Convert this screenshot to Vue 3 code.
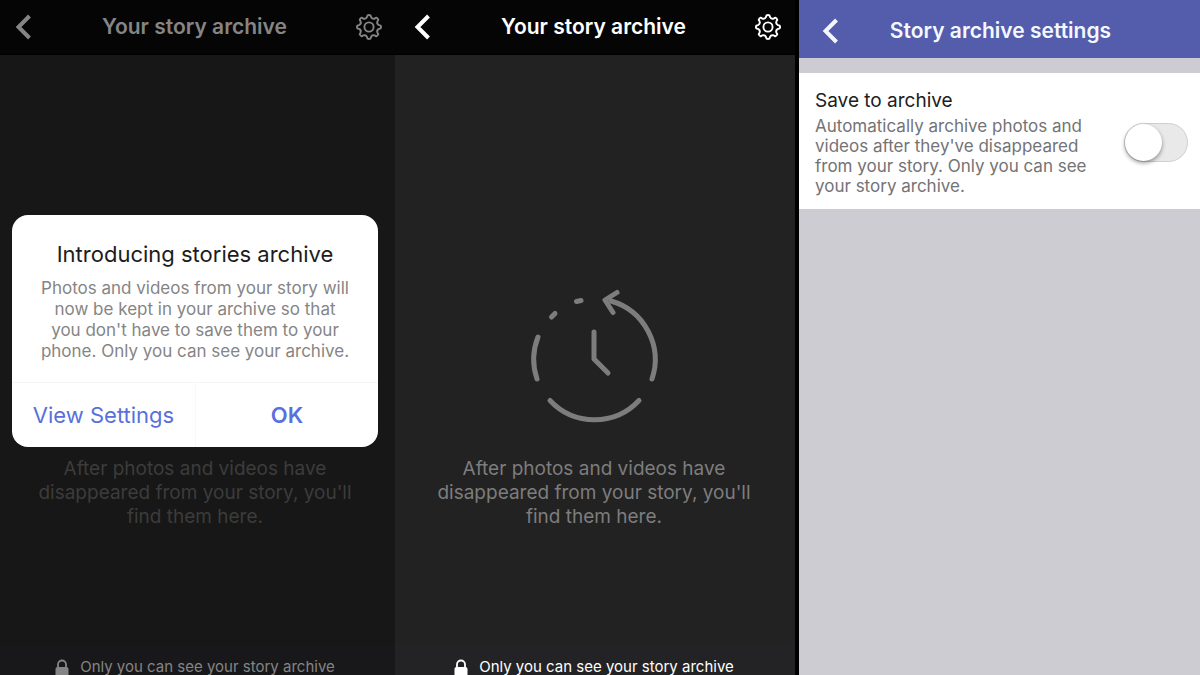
<script setup>
import { ref } from 'vue'

const saveToArchive = ref(false)

const screens = [
  { id: 'intro', dialog: true },
  { id: 'archive', dialog: false }
]

function polar(radius, degrees) {
  const a = ((degrees - 90) * Math.PI) / 180
  return `${(14 + radius * Math.cos(a)).toFixed(2)} ${(14 + radius * Math.sin(a)).toFixed(2)}`
}

function buildGear() {
  let d = ''
  for (let i = 0; i < 8; i++) {
    const t = i * 45
    d += `${i ? 'L' : 'M'}${polar(11.8, t - 7)} Q${polar(12.4, t)} ${polar(11.8, t + 7)} `
    d += `L${polar(10.2, t + 11)} Q${polar(8, t + 22.5)} ${polar(10.2, t + 34)} `
  }
  return d + 'Z'
}

const gearPath = buildGear()
</script>

<template>
  <div class="page">
    <section
      v-for="screen in screens"
      :key="screen.id"
      class="screen"
      :class="{ dimmed: screen.dialog }"
    >
      <header class="bar">
        <button class="icon-button" type="button" aria-label="Back">
          <svg width="20" height="28" viewBox="0 0 20 28">
            <path d="M15.5 3 4.5 14 15.5 25" fill="none" stroke="currentColor" stroke-width="4" />
          </svg>
        </button>
        <h1 class="bar-title">Your story archive</h1>
        <button class="icon-button" type="button" aria-label="Settings">
          <svg width="28" height="28" viewBox="0 0 28 28" fill="none" stroke="currentColor" stroke-width="1.9" stroke-linejoin="round">
            <path :d="gearPath" />
            <circle cx="14" cy="14" r="4.6" />
          </svg>
        </button>
      </header>

      <main class="empty">
        <svg class="clock" width="140" height="140" viewBox="0 0 140 140" fill="none" stroke="currentColor" stroke-width="5" stroke-linecap="round" stroke-linejoin="round">
          <path d="M87 13 A61 61 0 0 1 128 91" />
          <path d="M93 4.5 81 12 89 24.5" />
          <path d="M115 112.500 A61 61 0 0 1 26 112.500" />
          <path d="M13 91 A61 61 0 0 1 14 49" />
          <path d="M27.5 29 31 25.5 M52.5 13.5 57 12.5" />
          <path d="M70 44 V71 L84 85" />
        </svg>
        <p class="empty-text">After photos and videos have<br>disappeared from your story, you'll<br>find them here.</p>
      </main>

      <footer class="privacy">
        <svg width="14" height="16" viewBox="0 0 14 16">
          <path d="M3 9V5.5a4 4 0 0 1 8 0V9" fill="none" stroke="currentColor" stroke-width="1.8" />
          <path d="M0.5 16V10Q0.5 8 2.5 8H11.5Q13.5 8 13.5 10V16Z" fill="currentColor" />
        </svg>
        <span>Only you can see your story archive</span>
      </footer>

      <div v-if="screen.dialog" class="dialog" role="dialog" aria-labelledby="dialog-title">
        <h2 id="dialog-title" class="dialog-title">Introducing stories archive</h2>
        <p class="dialog-text">Photos and videos from your story will<br>now be kept in your archive so that<br>you don't have to save them to your<br>phone. Only you can see your archive.</p>
        <div class="dialog-actions">
          <button type="button" class="action">View Settings</button>
          <button type="button" class="action primary">OK</button>
        </div>
      </div>
    </section>

    <section class="settings">
      <header class="settings-bar">
        <button class="icon-button" type="button" aria-label="Back">
          <svg width="20" height="28" viewBox="0 0 20 28">
            <path d="M15.5 3 4.5 14 15.5 25" fill="none" stroke="currentColor" stroke-width="4" />
          </svg>
        </button>
        <h1 class="bar-title">Story archive settings</h1>
      </header>
      <div class="setting">
        <div class="setting-copy">
          <label for="save-archive" class="setting-title">Save to archive</label>
          <p id="save-help" class="setting-text">Automatically archive photos and<br>videos after they've disappeared<br>from your story. Only you can see<br>your story archive.</p>
        </div>
        <input id="save-archive" v-model="saveToArchive" class="toggle" type="checkbox" role="switch" aria-describedby="save-help">
      </div>
    </section>
  </div>
</template>

<style>
body {
  margin: 0;
  background: #000;
}
</style>

<style scoped>
.page {
  display: grid;
  grid-template-columns: 395fr 400fr 405fr;
  height: 100vh;
  overflow: hidden;
  font-family: Inter, "Liberation Sans", sans-serif;
}

h1, h2, p {
  margin: 0;
}

button {
  padding: 0;
  border: 0;
  background: none;
  color: inherit;
  font: inherit;
  cursor: pointer;
}

svg {
  display: block;
}

.screen {
  position: relative;
  display: flex;
  flex-direction: column;
  min-width: 0;
  min-height: 0;
  background: #222;
  color: #fff;
}

.bar {
  display: flex;
  align-items: center;
  justify-content: space-between;
  height: 54px;
  padding: 0 13px 0 18px;
  background: #050505;
  border-bottom: 1px solid #000;
}

.bar-title {
  font-size: 21px;
  line-height: 24px;
  font-weight: 600;
  white-space: nowrap;
}

.empty {
  flex: 1;
  min-height: 0;
  display: flex;
  flex-direction: column;
  align-items: center;
  gap: 29px;
  padding-top: 233px;
  padding-right: 2px;
  box-sizing: border-box;
  color: #7d7d7d;
}

.empty-text {
  font-size: 19px;
  line-height: 24px;
  text-align: center;
  white-space: nowrap;
}

.privacy {
  display: flex;
  align-items: flex-end;
  justify-content: center;
  gap: 11px;
  padding-top: 14px;
  padding-right: 2px;
  background: #232325;
  font-size: 15px;
  line-height: 16px;
  white-space: nowrap;
}

.dimmed {
  background: #171717;
  color: #858585;
}

.dimmed .bar {
  padding-left: 14px;
  padding-right: 12px;
}

.dimmed .empty {
  padding-right: 5px;
  color: #3c3c3c;
}

.dimmed .privacy {
  padding-right: 5px;
  background: #18181a;
}

.dialog {
  position: absolute;
  top: 215px;
  left: 12px;
  right: 17px;
  border-radius: 16px;
  overflow: hidden;
  background: #fff;
  text-align: center;
  white-space: nowrap;
}

.dialog-title {
  padding-top: 25px;
  color: #1c1c20;
  font-size: 22px;
  line-height: 28px;
  font-weight: 400;
}

.dialog-text {
  padding: 10px 0 20px;
  color: #858585;
  font-size: 17px;
  line-height: 21px;
}

.dialog-actions {
  display: grid;
  grid-template-columns: 1fr 1fr;
  border-top: 1px solid #f5f5f6;
}

.action {
  height: 64px;
  color: #5870dc;
  font-size: 22px;
}

.action + .action {
  border-left: 1px solid #f8f8f9;
}

.primary {
  font-weight: 600;
}

.settings {
  min-width: 0;
  border-left: 4px solid #000;
  background: #cdccd2;
}

.settings-bar {
  display: grid;
  grid-template-columns: 20px 1fr 20px;
  align-items: center;
  height: 58px;
  padding: 4px 20px 0 22px;
  box-sizing: border-box;
  background: #545cac;
  color: #f3f8ff;
  text-align: center;
}

.setting {
  display: flex;
  align-items: center;
  justify-content: space-between;
  margin-top: 15px;
  padding: 16px 12px 13px 16px;
  background: #fff;
}

.setting-title {
  display: block;
  color: #202020;
  font-size: 19px;
  line-height: 24px;
}

.setting-text {
  padding-top: 3px;
  color: #737376;
  font-size: 17px;
  line-height: 20px;
  white-space: nowrap;
}

.toggle {
  appearance: none;
  flex: none;
  width: 64px;
  height: 39px;
  margin: 0;
  border: 1px solid #cfcfcf;
  border-radius: 20px;
  background: #e9e9ea;
  cursor: pointer;
}

.toggle::before {
  content: "";
  display: block;
  width: 37px;
  height: 37px;
  border-radius: 50%;
  background: #fff;
  box-shadow: 0 2px 4px rgba(0, 0, 0, 0.4);
}

.toggle:checked {
  background: #545cac;
}

.toggle:checked::before {
  margin-left: auto;
}
</style>
